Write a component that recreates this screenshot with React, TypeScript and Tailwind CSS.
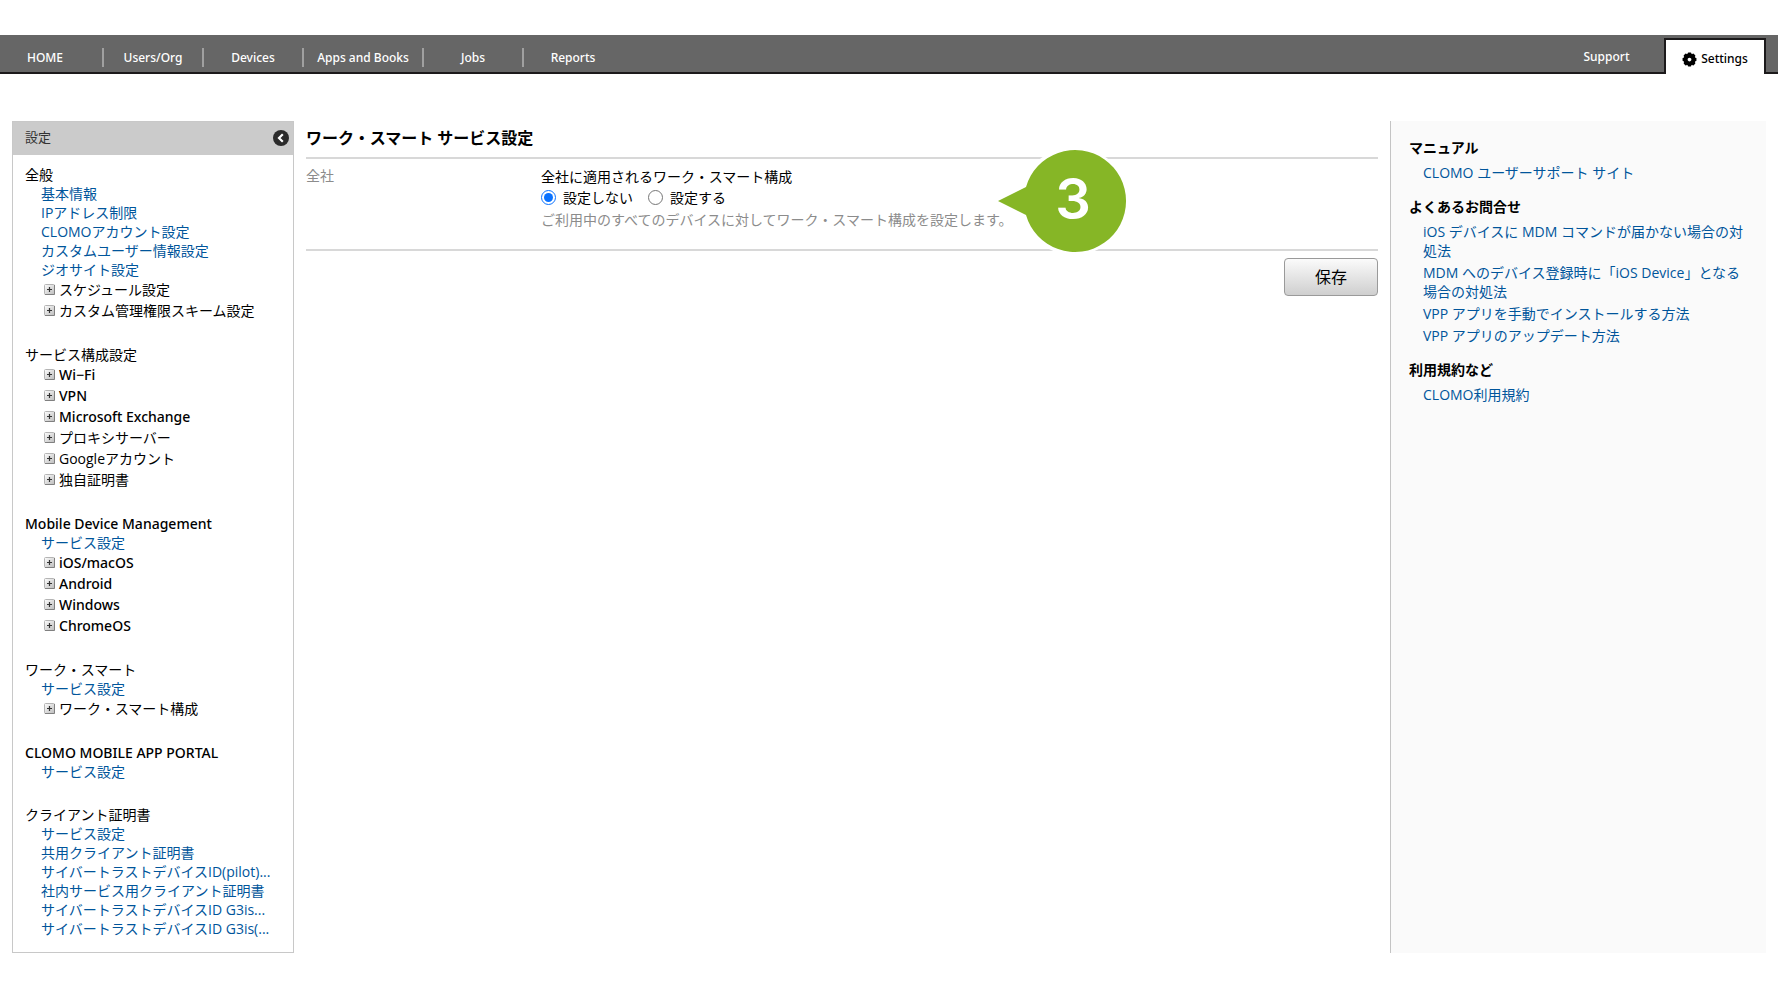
import { Fragment } from "react";

type Item = { label: string; tree?: boolean };
type Section = { title: string; items: Item[] };

const link = (label: string): Item => ({ label });
const tree = (label: string): Item => ({ label, tree: true });

const sections: Section[] = [
  {
    title: "全般",
    items: [
      link("基本情報"),
      link("IPアドレス制限"),
      link("CLOMOアカウント設定"),
      link("カスタムユーザー情報設定"),
      link("ジオサイト設定"),
      tree("スケジュール設定"),
      tree("カスタム管理権限スキーム設定"),
    ],
  },
  {
    title: "サービス構成設定",
    items: [
      tree("Wi−Fi"),
      tree("VPN"),
      tree("Microsoft Exchange"),
      tree("プロキシサーバー"),
      tree("Googleアカウント"),
      tree("独自証明書"),
    ],
  },
  {
    title: "Mobile Device Management",
    items: [link("サービス設定"), tree("iOS/macOS"), tree("Android"), tree("Windows"), tree("ChromeOS")],
  },
  { title: "ワーク・スマート", items: [link("サービス設定"), tree("ワーク・スマート構成")] },
  { title: "CLOMO MOBILE APP PORTAL", items: [link("サービス設定")] },
  {
    title: "クライアント証明書",
    items: [
      link("サービス設定"),
      link("共用クライアント証明書"),
      link("サイバートラストデバイスID(pilot)..."),
      link("社内サービス用クライアント証明書"),
      link("サイバートラストデバイスID G3is..."),
      link("サイバートラストデバイスID G3is(..."),
    ],
  },
];

const help = [
  { title: "マニュアル", links: ["CLOMO ユーザーサポート サイト"] },
  {
    title: "よくあるお問合せ",
    links: [
      "iOS デバイスに MDM コマンドが届かない場合の対処法",
      "MDM へのデバイス登録時に「iOS Device」となる場合の対処法",
      "VPP アプリを手動でインストールする方法",
      "VPP アプリのアップデート方法",
    ],
  },
  { title: "利用規約など", links: ["CLOMO利用規約"] },
];

const nav = [
  { label: "HOME", width: "w-[90px] mr-3" },
  { label: "Users/Org", width: "w-[98px]" },
  { label: "Devices", width: "w-[98px]" },
  { label: "Apps and Books", width: "w-[118px]" },
  { label: "Jobs", width: "w-[98px]" },
  { label: "Reports", width: "w-[98px]" },
];

/* Labels without Japanese characters use a slightly heavier face. */
const latinFace = (text: string) =>
  /[\u3000-\u9fff]/.test(text) ? "" : "font-['Noto_Sans','Open_Sans',sans-serif] font-medium";

function PlusIcon() {
  return (
    <svg viewBox="0 0 11 11" className="size-[11px] shrink-0" aria-hidden="true">
      <defs>
        <linearGradient id="plus" x1="0" y1="0" x2="1" y2="1">
          <stop offset="0" stopColor="#fff" />
          <stop offset="1" stopColor="#bbb" />
        </linearGradient>
      </defs>
      <rect x=".5" y=".5" width="10" height="10" rx="1" fill="url(#plus)" stroke="#b4b4b4" />
      <path d="M10.5 1v9.5H1" fill="none" stroke="#808080" />
      <path d="M5.5 3v5M3 5.5h5" stroke="#333" strokeWidth="1.2" />
    </svg>
  );
}

function Gear() {
  return (
    <svg viewBox="-8 -8 16 16" className="size-[15px]" aria-hidden="true">
      <circle r="4.2" fill="none" stroke="currentColor" strokeWidth="4.4" />
      {[0, 45, 90, 135].map((angle) => (
        <g key={angle} transform={`rotate(${angle})`} fill="currentColor">
          <rect x="-1.9" y="-7.4" width="3.8" height="3" rx=".8" />
          <rect x="-1.9" y="4.4" width="3.8" height="3" rx=".8" />
        </g>
      ))}
    </svg>
  );
}

function Header() {
  return (
    <header className="mt-[35px] flex h-[39px] items-end justify-between border-b-2 border-[#1c1a1b] bg-[#666] font-['Noto_Sans',sans-serif] text-xs font-medium text-white">
      <nav className="flex h-full items-center pt-2" aria-label="メイン">
        {nav.map((n, i) => (
          <Fragment key={n.label}>
            {i > 0 && <span className="h-[19px] w-0.5 bg-[#a0a0a0]" />}
            <a href="#" className={`${n.width} text-center`}>
              {n.label}
            </a>
          </Fragment>
        ))}
      </nav>
      <div className="-mb-0.5 flex h-9 items-stretch pr-3">
        <a href="#" className="flex w-[115px] items-center justify-center pt-0.5">
          Support
        </a>
        <a
          href="#"
          className="flex w-[102px] items-center justify-center gap-1 border-2 border-b-0 border-[#1c1a1b] bg-white pt-1 text-black"
        >
          <Gear />
          Settings
        </a>
      </div>
    </header>
  );
}

function Sidebar() {
  return (
    <aside className="w-[282px] shrink-0 border border-[#c8c8c8]">
      <div className="flex h-[33px] items-center justify-between bg-[#cbcbcb] pr-1 pb-0.5 pl-3">
        <h2 className="text-[13px] text-[#333]">設定</h2>
        <button type="button" aria-label="閉じる">
          <svg viewBox="0 0 16 16" className="size-4">
            <circle cx="8" cy="8" r="8" fill="#2b2b2b" />
            <path d="M9.8 4.2 6 8l3.8 3.8" fill="none" stroke="#fff" strokeWidth="2.2" />
          </svg>
        </button>
      </div>
      <div className="flex flex-col gap-6 pt-2.5 pb-3.5 pl-3">
        {sections.map((s) => (
          <section key={s.title}>
            <h3 className={`leading-[19px] ${latinFace(s.title)}`}>{s.title}</h3>
            <ul className="pl-4">
              {s.items.map((it) =>
                it.tree ? (
                  <li key={it.label}>
                    <button
                      type="button"
                      className={`ml-[3px] flex h-[21px] items-center gap-1 leading-[21px] ${latinFace(it.label)}`}
                    >
                      <PlusIcon />
                      {it.label}
                    </button>
                  </li>
                ) : (
                  <li key={it.label} className="leading-[19px]">
                    <a href="#" className="block whitespace-nowrap text-[#00559b]">
                      {it.label}
                    </a>
                  </li>
                ),
              )}
            </ul>
          </section>
        ))}
      </div>
    </aside>
  );
}

function Callout() {
  return (
    <div className="pointer-events-none absolute -top-3 left-[688px]">
      <svg viewBox="0 0 136 108" className="h-[108px] w-[136px]" aria-hidden="true">
        <circle cx="80" cy="54" r="54" fill="#fff" />
        <path d="M4 54 32 40a51 51 0 1 1 0 28z" fill="#86b626" />
      </svg>
      <span className="absolute top-0 left-[25px] flex h-[104px] w-[108px] items-center justify-center font-[Inter] text-[56px] leading-none font-semibold text-white">
        3
      </span>
    </div>
  );
}

function Main() {
  return (
    <main className="min-w-0 flex-1">
      <h1 className="h-9 text-base leading-[34px] font-bold">ワーク・スマート サービス設定</h1>
      <form>
        <div className="relative flex h-[94px] border-y-2 border-[#d8d8d8] pt-[7px]">
          <div className="w-[235px] shrink-0 leading-[19px] text-[#8c8c8c]">全社</div>
          <fieldset>
            <legend className="leading-[21px]">全社に適用されるワーク・スマート構成</legend>
            <div className="flex h-[21px] items-center gap-[15px]">
              <label className="flex items-center gap-[7px]">
                <input type="radio" name="config" defaultChecked className="size-[15px] accent-[#0a72ff]" />
                設定しない
              </label>
              <label className="flex items-center gap-[7px]">
                <input type="radio" name="config" className="size-[15px] accent-[#0a72ff]" />
                設定する
              </label>
            </div>
            <p className="leading-6 text-[#8c8c8c]">
              ご利用中のすべてのデバイスに対してワーク・スマート構成を設定します。
            </p>
          </fieldset>
          <Callout />
        </div>
        <div className="mt-[7px] flex justify-end">
          <button
            type="button"
            className="h-[38px] w-[94px] rounded border border-[#9a9a9a] bg-linear-to-b from-[#fbfbfb] to-[#cfcfcf] text-base"
          >
            保存
          </button>
        </div>
      </form>
    </main>
  );
}

function Help() {
  return (
    <aside className="flex w-[376px] shrink-0 flex-col gap-[15px] border-l border-[#c4c4c4] bg-[#fafafa] pt-[17px] pr-4 pl-[18px] leading-[19px]">
      {help.map((h) => (
        <section key={h.title}>
          <h3 className="font-bold">{h.title}</h3>
          <ul className="mt-1.5 flex flex-col gap-[3px] pl-3.5">
            {h.links.map((l) => (
              <li key={l}>
                <a href="#" className="text-[#00559b]">
                  {l}
                </a>
              </li>
            ))}
          </ul>
        </section>
      ))}
    </aside>
  );
}

export default function App() {
  return (
    <div
      lang="ja"
      className="flow-root min-h-screen bg-white font-['Open_Sans','Noto_Sans_CJK_JP',sans-serif] text-sm text-black"
    >
      <Header />
      <div className="mt-[47px] flex gap-3 px-3">
        <Sidebar />
        <Main />
        <Help />
      </div>
    </div>
  );
}
